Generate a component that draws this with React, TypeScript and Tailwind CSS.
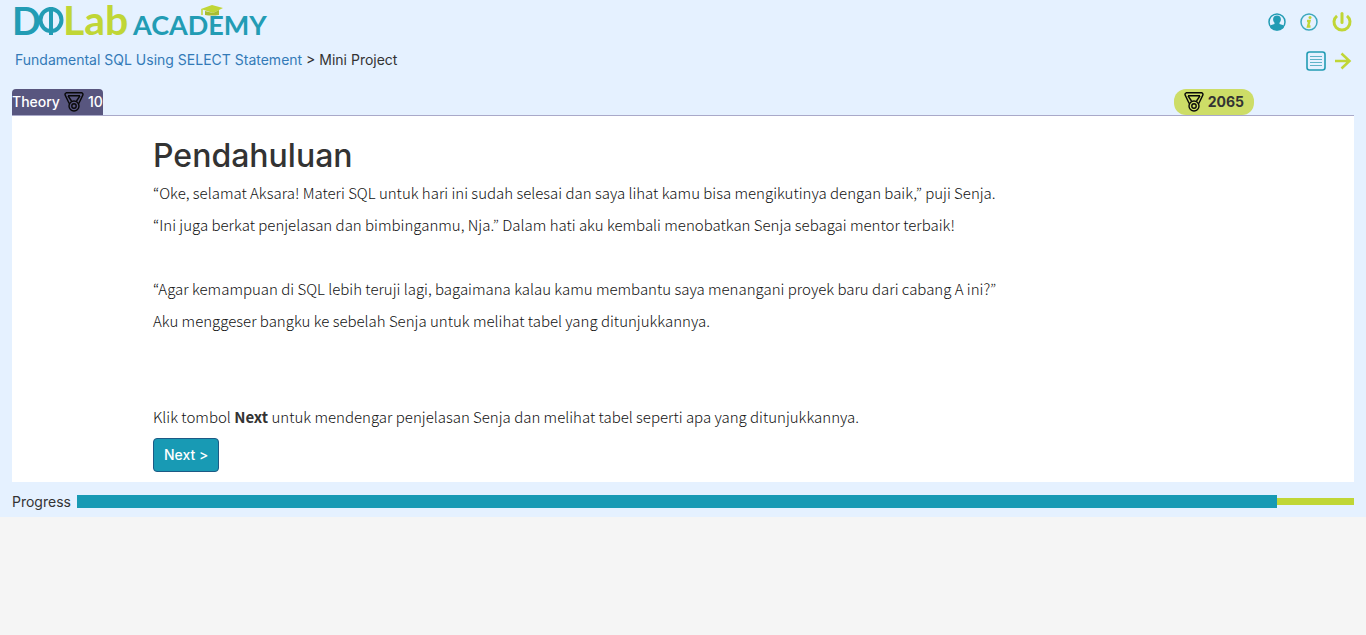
import type { ReactNode } from 'react';

function Logo() {
  return (
    <svg width="256" height="44" viewBox="0 0 256 44" role="img" aria-label="DQLab Academy" className="block overflow-visible font-['Lato',sans-serif]">
      <text x="-2" y="35" fontSize="38" fontWeight="700" fill="#229cb4">D</text>
      <ellipse cx="37" cy="20" rx="10.500" ry="11" fill="none" stroke="#229cb4" strokeWidth="4" />
      <path d="M37 7v28" stroke="#229cb4" strokeWidth="4" />
      <text x="49" y="35" fontSize="41" fontWeight="700" fill="#c0d636">Lab</text>
      <text x="119" y="35" fontSize="27" fontWeight="700" fill="#229cb4">ACADEMY</text>
      <path d="M187 9 198 5 209 8 199 13Z" fill="#c0d636" />
      <path d="M191 11v4q7 1 14 0v-5l-6 3Z" fill="#a9bd31" />
      <path d="M188 9v6" stroke="#c0d636" strokeWidth="1.5" />
    </svg>
  );
}

function Medal() {
  return (
    <svg width="20" height="20" viewBox="0 0 20 20" fill="none" stroke="#080808" strokeWidth="1.4" strokeLinejoin="round" aria-hidden="true" className="shrink-0">
      <path d="M2 .8h16q1.500 1 .7 2.600L14.800 11.500M2 .8Q.5 1.800 1.300 3.400L5.200 11.500M4 3.800h12M4 3.800 7.500 9M16 3.800 12.500 9" />
      <circle cx="10" cy="14" r="5" />
      <circle cx="10" cy="14" r="2.200" />
    </svg>
  );
}

function IconLink({ label, children }: { label: string; children: ReactNode }) {
  return <a href="#" aria-label={label} className="block">{children}</a>;
}

function Header() {
  return (
    <header className="flex flex-col">
      <div className="flex h-11 items-center justify-between pr-3.5 pl-3.5">
        <a href="#" aria-label="Home"><Logo /></a>
        <div className="flex items-center gap-3.5">
          <IconLink label="Profile">
            <svg width="18" height="18" viewBox="0 0 18 18" fill="none">
              <circle cx="9" cy="9" r="8" fill="#e5f1ff" stroke="#229cb4" strokeWidth="1.5" />
              <path d="M9 2.500c-2.500 0-3.900 1.500-3.900 3.700 0 1.600.6 2.600 1.400 3.500v1.300L2.500 12.300v2.800Q9 20 15.500 15.100v-2.800l-4-1.300V9.700c.8-.9 1.400-1.900 1.400-3.500 0-2.200-1.400-3.700-3.900-3.700Z" fill="#229cb4" />
            </svg>
          </IconLink>
          <IconLink label="Information">
            <svg width="18" height="18" viewBox="0 0 18 18" fill="none">
              <circle cx="9" cy="9" r="8" stroke="#3ca8bd" strokeWidth="1.5" />
              <circle cx="10" cy="4.500" r="1.500" fill="#c0d636" />
              <path d="M7 8h2.500L8 13.500h2.500" stroke="#c0d636" strokeWidth="2.400" />
            </svg>
          </IconLink>
          <IconLink label="Log out">
            <svg width="20" height="20" viewBox="0 0 20 20" fill="none" stroke="#c0d636" strokeWidth="3">
              <path d="M5 3.800a8 8 0 1 0 10 0" />
              <path d="M10 1.500v9" strokeLinecap="round" />
            </svg>
          </IconLink>
        </div>
      </div>
      <div className="flex h-8 items-center justify-between pr-3.5 pl-3.75">
        <nav aria-label="Breadcrumb" className="text-sm">
          <a href="#" className="text-[#337ab7]">Fundamental SQL Using SELECT Statement</a>
          {' > '}
          <span>Mini Project</span>
        </nav>
        <div className="flex items-center gap-2 pt-0.5">
          <IconLink label="Contents">
            <svg width="20" height="20" viewBox="0 0 20 20" fill="none" stroke="#229cb4">
              <rect x="1" y="1" width="18" height="18" rx="2.500" strokeWidth="1.6" />
              <path d="M4 5.500h12M4 8.500h12M4 11.500h12M4 14.500h12" stroke="#5fb3c8" strokeWidth="1.2" />
            </svg>
          </IconLink>
          <IconLink label="Next lesson">
            <svg width="18" height="18" viewBox="0 0 18 18" fill="none" stroke="#c0d636" strokeWidth="2.500">
              <path d="M1 9h15M7.500 1.500 15.500 9 7.500 16.500" />
            </svg>
          </IconLink>
        </div>
      </div>
    </header>
  );
}

export default function App() {
  return (
    <div className="min-h-screen bg-[#f5f5f5] font-['Inter','Liberation_Sans',sans-serif] text-sm text-[#333333]">
      <div className="bg-[#e5f1ff]">
        <Header />
        <div className="px-3 pt-3.25">
          <div className="flex justify-between border-b border-[#a9a9c9]">
            <div className="flex h-6.5 items-center gap-1 rounded-t bg-[#58567f] font-medium text-white">
              <span>Theory</span><Medal /><span>10</span>
            </div>
            <div className="mr-25 flex h-6.5 items-center gap-1 rounded-xl bg-[#cddd67] px-2.5 font-bold">
              <Medal /><span>2065</span>
            </div>
          </div>
          <main className="bg-white px-35.25 pt-5 pb-2.5">
            <h1 className="mb-px text-[32px] leading-10 font-medium">Pendahuluan</h1>
            <div className="font-['Noto_Sans_CJK_JP',sans-serif] text-[15px] leading-8 font-light text-[#111111]">
              <p>“Oke, selamat Aksara! Materi SQL untuk hari ini sudah selesai dan saya lihat kamu bisa mengikutinya dengan baik,” puji Senja.</p>
              <p>“Ini juga berkat penjelasan dan bimbinganmu, Nja.” Dalam hati aku kembali menobatkan Senja sebagai mentor terbaik!</p>
              <p className="mt-8">“Agar kemampuan di SQL lebih teruji lagi, bagaimana kalau kamu membantu saya menangani proyek baru dari cabang A ini?”</p>
              <p>Aku menggeser bangku ke sebelah Senja untuk melihat tabel yang ditunjukkannya.</p>
              <p className="mt-16">Klik tombol <strong className="font-bold text-[#333333]">Next</strong> untuk mendengar penjelasan Senja dan melihat tabel seperti apa yang ditunjukkannya.</p>
            </div>
            <button type="button" className="mt-1.25 block h-8.5 rounded border border-[#1c5a85] bg-[#189ab4] px-2.5 font-medium text-white">Next &gt;</button>
          </main>
        </div>
        <div className="flex h-8.75 items-center gap-1.5 px-3 pt-1">
          <span id="progress-label">Progress</span>
          <div role="progressbar" aria-labelledby="progress-label" aria-valuenow={94} aria-valuemin={0} aria-valuemax={100} className="flex flex-1 items-center">
            <div className="h-3.25 w-[94%] bg-[#189ab4]" />
            <div className="h-1.75 flex-1 bg-[#c0d636]" />
          </div>
        </div>
      </div>
    </div>
  );
}
